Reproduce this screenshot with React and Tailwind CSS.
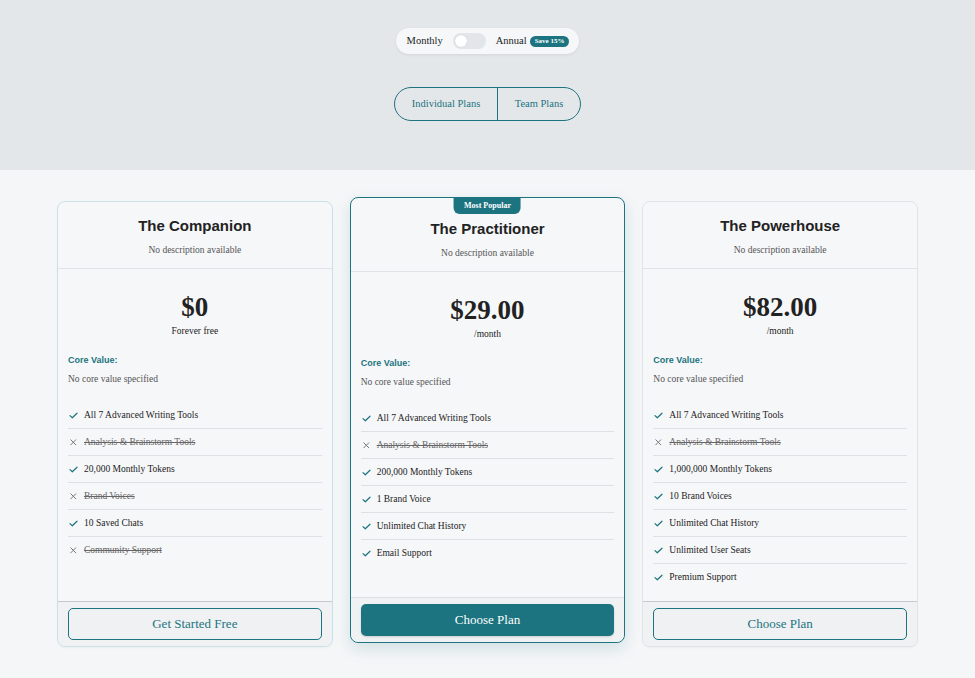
import React from "react";

const TEAL = "#1c7480";

function Check() {
  return (
    <svg width="9" height="7" viewBox="0 0 9 7" className="shrink-0">
      <polyline points="1,3.6 3.3,5.8 8,1.2" fill="none" stroke={TEAL} strokeWidth="1.2" strokeLinecap="round" strokeLinejoin="round" />
    </svg>
  );
}

function Cross() {
  return (
    <svg width="9" height="7" viewBox="0 0 9 7" className="shrink-0">
      <path d="M1.8 0.8 L6.8 5.8 M6.8 0.8 L1.8 5.8" fill="none" stroke="#777" strokeWidth="1" strokeLinecap="round" />
    </svg>
  );
}

const plans = [
  {
    name: "The Companion",
    price: "$0",
    sub: "Forever free",
    button: "Get Started Free",
    border: "border-[#c9e2e7]",
    features: [
      ["All 7 Advanced Writing Tools", true],
      ["Analysis & Brainstorm Tools", false],
      ["20,000 Monthly Tokens", true],
      ["Brand Voices", false],
      ["10 Saved Chats", true],
      ["Community Support", false],
    ],
  },
  {
    name: "The Practitioner",
    price: "$29.00",
    sub: "/month",
    button: "Choose Plan",
    popular: true,
    features: [
      ["All 7 Advanced Writing Tools", true],
      ["Analysis & Brainstorm Tools", false],
      ["200,000 Monthly Tokens", true],
      ["1 Brand Voice", true],
      ["Unlimited Chat History", true],
      ["Email Support", true],
    ],
  },
  {
    name: "The Powerhouse",
    price: "$82.00",
    sub: "/month",
    button: "Choose Plan",
    border: "border-[#e1e4e7]",
    features: [
      ["All 7 Advanced Writing Tools", true],
      ["Analysis & Brainstorm Tools", false],
      ["1,000,000 Monthly Tokens", true],
      ["10 Brand Voices", true],
      ["Unlimited Chat History", true],
      ["Unlimited User Seats", true],
      ["Premium Support", true],
    ],
  },
];

function Card({ plan }) {
  const popular = plan.popular;
  return (
    <div
      className={
        "relative flex flex-col rounded-lg border bg-[#f6f7f9] " +
        (popular
          ? "border-[#1c7480] -translate-y-[4px] shadow-[0_6px_16px_rgba(28,116,128,0.16)]"
          : plan.border + " shadow-[0_1px_2px_rgba(0,0,0,0.04)]")
      }
    >
      {popular && (
        <div className="absolute left-1/2 -translate-x-1/2 -top-px h-[17px] px-[10px] rounded-b-md bg-[#1c7480] text-white font-['Liberation_Serif',serif] font-bold text-[8px] leading-[17px] whitespace-nowrap">
          Most Popular
        </div>
      )}
      <div className={"flex flex-col items-center border-b border-[#e0e4e7] pb-[11px] " + (popular ? "pt-[21px]" : "pt-[14px]")}>
        <div className="font-['Liberation_Sans',Arial,sans-serif] font-bold text-[15px] leading-[20px] text-[#222]">
          {plan.name}
        </div>
        <div className="mt-[7px] font-['Liberation_Serif',serif] text-[9.5px] leading-[14px] text-[#555]">
          No description available
        </div>
      </div>
      <div className="flex-1 px-[10px] pb-[11px]">
        <div className="flex flex-col items-center pt-[22px]">
          <div className="font-['Liberation_Serif',serif] font-bold text-[27px] leading-[32px] text-[#222]">
            {plan.price}
          </div>
          <div className="mt-[1px] font-['Liberation_Serif',serif] text-[9.5px] leading-[14px] text-[#222]">
            {plan.sub}
          </div>
        </div>
        <div className="mt-[16px] font-['Liberation_Sans',Arial,sans-serif] font-bold text-[9px] leading-[12px] text-[#1c7480]">
          Core Value:
        </div>
        <div className="mt-[6px] font-['Liberation_Serif',serif] text-[9.5px] leading-[14px] text-[#555]">
          No core value specified
        </div>
        <ul className="mt-[16px]">
          {plan.features.map(([t, ok], i) => (
            <li
              key={i}
              className={
                "flex items-center gap-[6px] pl-[1px] py-[6px] font-['Liberation_Serif',serif] text-[9.5px] leading-[14px] " +
                (i < plan.features.length - 1 ? "border-b border-[#dde0e4]" : "")
              }
            >
              {ok ? <Check /> : <Cross />}
              <span className={ok ? "text-[#222]" : "text-[#666] line-through"}>{t}</span>
            </li>
          ))}
        </ul>
      </div>
      <div
        className={
          "rounded-b-lg bg-[#eff1f3] px-[10px] pt-[6px] pb-[6px] border-t " +
          (popular ? "border-[#dde0e3]" : "border-[#c6c9cc]")
        }
      >
        {popular ? (
          <button className="w-full h-[32px] rounded-[5px] bg-[#1c7480] text-white font-['Liberation_Serif',serif] text-[13px] shadow-[0_1px_2px_rgba(0,0,0,0.15)]">
            {plan.button}
          </button>
        ) : (
          <button className="w-full h-[32px] rounded-[5px] border border-[#1c7480] bg-[#eff1f3] text-[#1c7480] font-['Liberation_Serif',serif] text-[13px]">
            {plan.button}
          </button>
        )}
      </div>
    </div>
  );
}

export default function App() {
  return (
    <div className="min-h-[678px] bg-[#f5f6f8] font-['Liberation_Serif',serif]">
      <div className="bg-[#e4e7ea] pt-[28px] pb-[49px] flex flex-col items-center">
        <div className="flex items-center h-[26px] pl-[11px] pr-[10px] rounded-full bg-[#f5f7f9] shadow-[0_1px_3px_rgba(0,0,0,0.08)]">
          <span className="text-[10.5px] text-[#222]">Monthly</span>
          <div className="ml-[10px] w-[33px] h-[16px] rounded-full bg-[#e2e5e9] flex items-center px-[2px]">
            <div className="w-[12px] h-[12px] rounded-full bg-white shadow-[0_0_1px_rgba(0,0,0,0.2)]" />
          </div>
          <span className="ml-[10px] text-[10.5px] text-[#222]">Annual</span>
          <span className="ml-[3px] h-[11px] px-[5px] rounded-full bg-[#1c7480] text-white font-bold text-[7px] leading-[11px]">
            Save 15%
          </span>
        </div>
        <div className="mt-[33px] flex h-[34px] rounded-full border border-[#1c7480] overflow-hidden">
          <button className="w-[103px] text-[10.5px] text-[#1c7480] border-r border-[#1c7480]">Individual Plans</button>
          <button className="w-[82px] text-[10.5px] text-[#1c7480]">Team Plans</button>
        </div>
      </div>
      <div className="pt-[31px] pb-[32px]">
        <div className="mx-auto w-[861px] grid grid-cols-3 gap-[17px]">
          {plans.map((p) => (
            <Card key={p.name} plan={p} />
          ))}
        </div>
      </div>
    </div>
  );
}
